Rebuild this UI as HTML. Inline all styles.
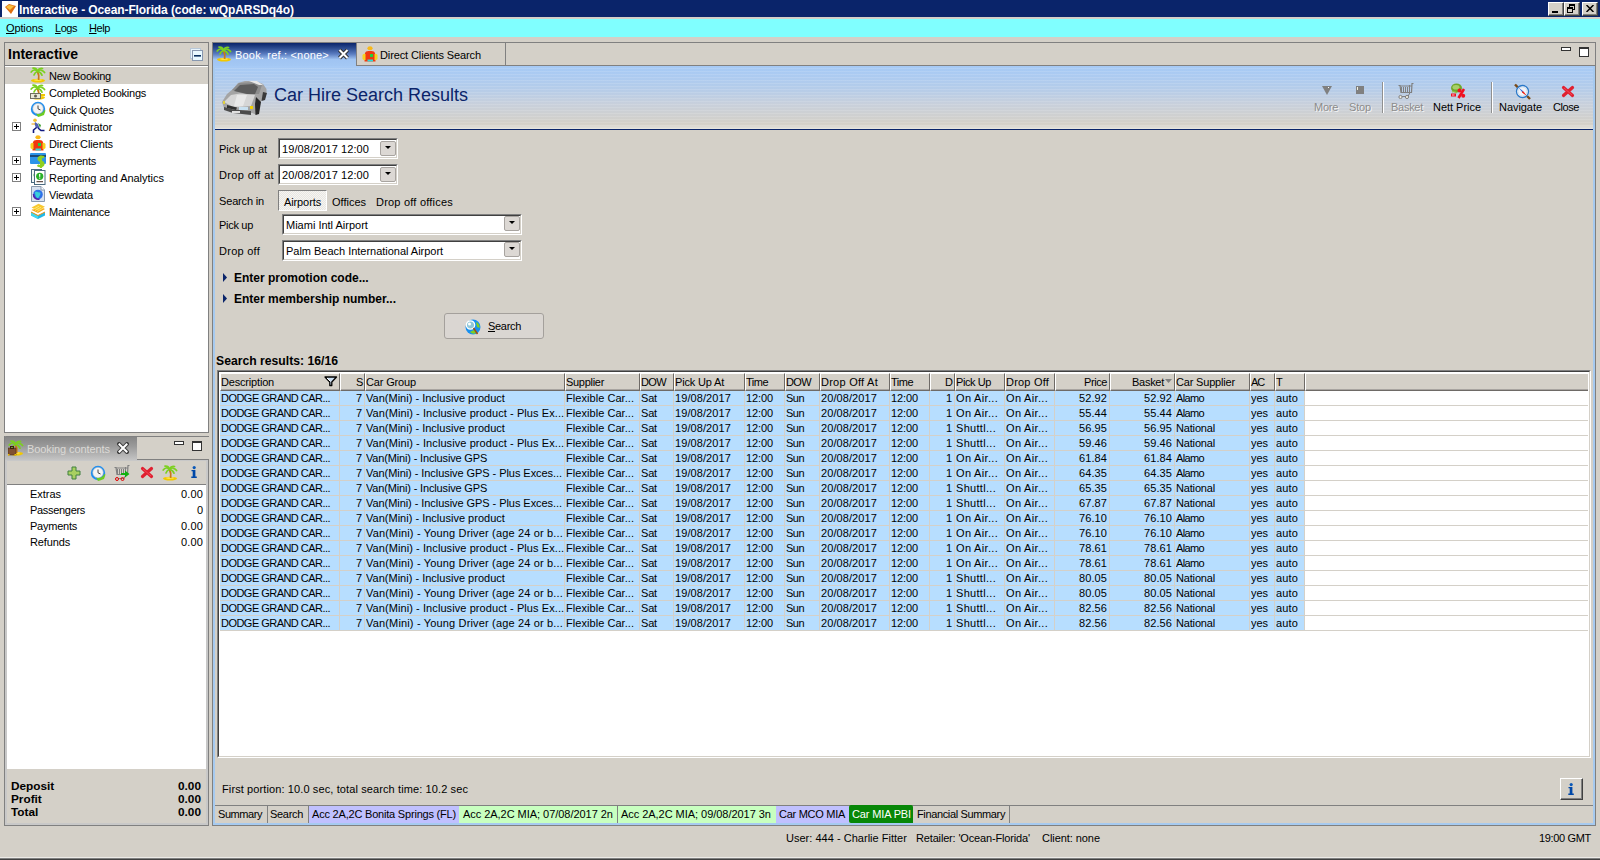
<!DOCTYPE html>
<html><head><meta charset="utf-8">
<style>
*{box-sizing:border-box;margin:0;padding:0}
html,body{width:1600px;height:860px;overflow:hidden;background:#D4D0C8;font-family:"Liberation Sans",sans-serif;font-size:11px;color:#000}
.a{position:absolute}
.t{position:absolute;white-space:nowrap;line-height:13px}
#title{left:0;top:0;width:1600px;height:18px;background:#0A246A;border-bottom:1px solid #D4D0C8}
#menu{left:0;top:19px;width:1600px;height:18px;background:#80FFFF}
.wbtn{position:absolute;top:2px;width:16px;height:14px;background:#D4D0C8;border-top:1px solid #fff;border-left:1px solid #fff;border-right:1px solid #404040;border-bottom:1px solid #404040;box-shadow:inset -1px -1px 0 #808080}
.panel{position:absolute;border:1px solid #808080}
.sunk{border-top:1px solid #808080;border-left:1px solid #808080;border-right:1px solid #fff;border-bottom:1px solid #fff}
.sunk2{border-top:1px solid #404040;border-left:1px solid #404040;border-right:1px solid #D4D0C8;border-bottom:1px solid #D4D0C8;background:#fff}
.ddb{position:absolute;width:16px;height:15px;background:#DCD8D4;border:1px solid #A8A4A0;border-radius:2px}
.ddb:after{content:"";position:absolute;left:4px;top:4px;border-left:3px solid transparent;border-right:3px solid transparent;border-top:3px solid #000}
.u{text-decoration:underline}
.tb{}
symbol{overflow:visible}
.hc{position:absolute;top:373px;height:18px;background:#D4D0C8;border-top:1px solid #fff;border-left:1px solid #fff;border-right:1px solid #6E6A66;border-bottom:1px solid #6E6A66;box-shadow:inset 0 -1px 0 #A8A4A0}
.btab{top:806px;height:17px;border-right:1px solid #808080}
.plus{position:absolute;left:12px;width:9px;height:9px;border:1px solid #808080;background:#fff}
.plus:before{content:"";position:absolute;left:1px;top:3px;width:5px;height:1px;background:#000}
.plus:after{content:"";position:absolute;left:3px;top:1px;width:1px;height:5px;background:#000}
</style></head><body>

<svg width="0" height="0" style="position:absolute">
<defs>
<symbol id="palm" viewBox="0 0 16 16">
 <ellipse cx="8" cy="13.6" rx="7" ry="1.9" fill="#F2C800"/>
 <ellipse cx="8" cy="13" rx="4" ry="0.8" fill="#FFE860"/>
 <path d="M7.5 4.5 C8.8 7 9.2 9.5 8.6 13" stroke="#C87818" stroke-width="1.8" fill="none"/>
 <g stroke="#7CD020" stroke-width="1.7" fill="none" stroke-linecap="round">
  <path d="M7.5 4 C5.5 2.5 3 2.5 1.2 5"/><path d="M7.5 4 C9.5 2.5 12.5 2.5 14.6 5.5"/><path d="M7.5 4 C6.5 1.5 4.5 1 3 1.2"/><path d="M7.5 4 C9 1.2 11 1 12.5 1.5"/><path d="M7.5 4.2 C5.5 5 4.5 6.5 4 8"/><path d="M7.5 4.2 C10 5 11.5 6.5 12 8.2"/>
 </g>
</symbol>
<symbol id="clock" viewBox="0 0 16 16">
 <circle cx="8" cy="8" r="7.2" fill="#1E8EF0"/>
 <circle cx="8" cy="7.6" r="5.3" fill="#F4F4F4" stroke="#A0B0C0" stroke-width="0.6"/>
 <path d="M8 4.5 V7.8 L10.5 9" stroke="#303030" stroke-width="0.9" fill="none"/>
 <path d="M6 12.5 C9 14 12.5 12.5 14.5 9 L15.5 9.5 L14 14 L10 15.5 L8 16 Z" fill="#6CCC20"/>
</symbol>
<symbol id="redx" viewBox="0 0 14 13">
 <path d="M2.5 2.5 L11.5 10.5 M11.5 2.5 L2.5 10.5" stroke="#E02030" stroke-width="3.2" stroke-linecap="round"/>
 <path d="M3 3 L11 10" stroke="#FF6070" stroke-width="1" opacity="0.6"/>
</symbol>
<symbol id="cartg" viewBox="0 0 16 16">
 <path d="M0.5 2.5 H2 L3 9.5 H13.5 L14 0.5 H15.5" stroke="#808080" stroke-width="1.2" fill="none"/>
 <path d="M3.5 4 V9 M5.5 4 V9 M7.5 4 V9 M9.5 4 V9 M11.5 2 V9 M2 3 H14" stroke="#808080" stroke-width="1" fill="none"/>
 <path d="M12 9.5 L10 13.5 H4" stroke="#808080" stroke-width="1" fill="none"/>
</symbol>
</defs></svg>
<!-- TITLE BAR -->
<div id="title" class="a">
  <div class="a" style="left:2px;top:1px;width:16px;height:16px;background:#fff"></div>
  <svg class="a" style="left:2px;top:1px" width="16" height="16"><path d="M3 6 L7 3 L14 5 L9 13 Z" fill="#E07010"/><path d="M4 6 L7 4 L12 5 L8 9 Z" fill="#F8C040"/></svg>
  <div class="t" style="left:19px;top:4px;color:#fff;font-weight:bold;font-size:12px;letter-spacing:-0.1px">Interactive - Ocean-Florida (code: wQpARSDq4o)</div>
  <div class="wbtn" style="left:1548px"><div class="a" style="left:3px;top:8px;width:6px;height:2px;background:#000"></div></div>
  <div class="wbtn" style="left:1564px"><div class="a" style="left:4px;top:1px;width:6px;height:6px;border:1px solid #000;border-top-width:2px"></div><div class="a" style="left:2px;top:4px;width:6px;height:6px;border:1px solid #000;border-top-width:2px;background:#D4D0C8"></div></div>
  <div class="wbtn" style="left:1582px"><svg class="a" style="left:3px;top:2px" width="8" height="7"><path d="M0.5 0 L7.5 7 M7.5 0 L0.5 7" stroke="#000" stroke-width="1.5"/></svg></div>
</div>

<!-- MENU -->
<div id="menu" class="a">
  <div class="t" style="left:6px;top:3px;letter-spacing:-0.13px"><span class="u">O</span>ptions</div>
  <div class="t" style="left:55px;top:3px;letter-spacing:-0.46px"><span class="u">L</span>ogs</div>
  <div class="t" style="left:89px;top:3px;letter-spacing:-0.41px"><span class="u">H</span>elp</div>
</div>

<!-- LEFT PANEL: Interactive -->
<div class="a" style="left:4px;top:42px;width:205px;height:391px;border:1px solid #808080;background:#fff">
  <div class="a" style="left:0;top:0;width:203px;height:23px;background:#D4D0C8;border-bottom:1px solid #808080"></div>
  <div class="t" style="left:3px;top:3px;font-weight:bold;font-size:14px;line-height:16px">Interactive</div>
  <svg class="a" style="left:185px;top:5px" width="14" height="14"><rect x="0.5" y="0.5" width="10" height="10" fill="#E8F4FC" stroke="#B8C8D8"/><rect x="2.5" y="2.5" width="10" height="10" fill="#E8F8FF" stroke="#8898B0"/><rect x="4" y="7" width="7" height="1.6" fill="#0A3060"/></svg>
  <div class="a" style="left:0;top:23px;width:203px;height:1px;background:#fff"></div>
  <div class="a" style="left:0;top:24px;width:203px;height:17px;background:#D4D0C8"></div>
</div>
<div id="tree">
  <div class="t" style="left:49px;top:70px;letter-spacing:-0.26px">New Booking</div>
  <div class="t" style="left:49px;top:87px;letter-spacing:-0.25px">Completed Bookings</div>
  <div class="t" style="left:49px;top:104px;letter-spacing:-0.14px">Quick Quotes</div>
  <div class="t" style="left:49px;top:121px;letter-spacing:-0.14px">Administrator</div>
  <div class="t" style="left:49px;top:138px;letter-spacing:-0.10px">Direct Clients</div>
  <div class="t" style="left:49px;top:155px;letter-spacing:-0.24px">Payments</div>
  <div class="t" style="left:49px;top:172px;letter-spacing:-0.03px">Reporting and Analytics</div>
  <div class="t" style="left:49px;top:189px;letter-spacing:-0.13px">Viewdata</div>
  <div class="t" style="left:49px;top:206px;letter-spacing:-0.18px">Maintenance</div>
  <div class="plus" style="top:122px"></div>
  <div class="plus" style="top:156px"></div>
  <div class="plus" style="top:173px"></div>
  <div class="plus" style="top:207px"></div>

  <svg class="a" style="left:30px;top:67px" width="16" height="16"><use href="#palm"/></svg>
  <svg class="a" style="left:30px;top:84px" width="16" height="16"><use href="#palm"/><rect x="0.5" y="9.5" width="10" height="5" fill="#E8E8D8" stroke="#707060"/><circle cx="5.5" cy="12" r="1.5" fill="#606050"/><path d="M11 11 H15" stroke="#F0C800" stroke-width="2"/></svg>
  <svg class="a" style="left:30px;top:101px" width="16" height="16"><use href="#clock"/></svg>
  <svg class="a" style="left:30px;top:118px" width="16" height="16"><circle cx="5" cy="2.2" r="1.8" fill="#F0C030"/><path d="M5 4 L8 6 L9.5 10 L6 10 L4.5 6 Z" fill="#5060B0"/><path d="M8 5 L11 7 L10 10 Z" fill="#40A030"/><path d="M1.5 6 H5" stroke="#F0B030" stroke-width="1.2"/><path d="M6.5 9.5 L3.5 12 L3.5 15 M8 10 L11 12.5 L14.5 12.5" stroke="#101880" stroke-width="1.6" fill="none"/></svg>
  <svg class="a" style="left:30px;top:135px" width="16" height="16"><ellipse cx="8" cy="2.3" rx="2.6" ry="2" fill="#F8B818"/><path d="M3 7 Q3.5 5 6.5 5 H9.5 Q12.5 5 13 7 L13.5 15.5 H2.5 Z" fill="#F03810"/><path d="M0.5 9 Q2 7 3.5 8 L3.5 14 Q1.5 14.5 0.5 13 Z M15.5 9 Q14 7 12.5 8 L12.5 14 Q14.5 14.5 15.5 13 Z" fill="#F8D020"/><rect x="8" y="8" width="3" height="3" fill="#20D040"/><rect x="5.5" y="13.5" width="5.5" height="2" fill="#30D8D8"/></svg>
  <svg class="a" style="left:30px;top:152px" width="16" height="16"><rect x="0" y="1" width="16" height="11" rx="1" fill="#2C94E8"/><rect x="0" y="3" width="16" height="2" fill="#1A4A78"/><path d="M14 5.5 C12 4 8.5 4.5 8.5 7 C8.5 9.5 13.5 9 13.5 11.8 C13.5 14.5 9.5 14.8 7.5 13.2 M11 3.5 V16" stroke="#90D020" stroke-width="2.2" fill="none"/></svg>
  <svg class="a" style="left:30px;top:169px" width="16" height="16"><rect x="1.5" y="0.5" width="10" height="13" fill="#F4F8FA" stroke="#4A6A80"/><circle cx="6" cy="6" r="2.5" fill="#30B030"/><rect x="4.5" y="1.5" width="10.5" height="14" fill="#fff" stroke="#4A6A80"/><circle cx="9.7" cy="7.3" r="3.6" fill="#28B028"/><rect x="9.1" y="5" width="1.2" height="2.8" fill="#fff"/><rect x="9.1" y="8.6" width="1.2" height="1" fill="#fff"/><rect x="6.5" y="12.2" width="6.5" height="1" fill="#402820"/></svg>
  <svg class="a" style="left:30px;top:186px" width="16" height="16"><path d="M1.5 0.5 H11 L14.5 4 V15.5 H1.5 Z" fill="#D8E2F0" stroke="#8A9AAE"/><path d="M11 0.5 V4 H14.5" fill="#fff" stroke="#8A9AAE"/><circle cx="8" cy="8.5" r="4.8" fill="#2E70E8"/><path d="M5 6 C7 5 8 7 10 6.2 C11.5 8 9 10.5 8 12.5 C6 11.5 5 9 5 6Z" fill="#38D0D8"/><path d="M3.5 8 C3.3 11.5 6 13.8 9.5 13.2" stroke="#5020A8" stroke-width="1.5" fill="none"/></svg>
  <svg class="a" style="left:30px;top:203px" width="16" height="16"><path d="M1 9 L8 12.5 L15 9 V12.5 L8 16 L1 12.5 Z" fill="#20B8E8"/><path d="M1 9 L8 12.5 V16 L1 12.5Z" fill="#40D8F0"/><path d="M1.5 7 L8.5 3 L15 6 L8 10 Z" fill="#F8A818"/><path d="M1.5 4.5 L8.5 0.8 L15 3.8 L8 7.5 Z" fill="#F8C830"/><path d="M3 6.5 L9 3.2 M5 7.5 L11 4.3 M7 8.5 L13 5.3" stroke="#FFF080" stroke-width="0.8"/><path d="M1 9 L8 12.5 L15 9" stroke="#E89010" stroke-width="1" fill="none"/></svg>
</div>

<!-- LEFT PANEL: Booking contents -->
<div class="a" style="left:4px;top:436px;width:205px;height:390px;border:1px solid #808080;border-top:none;background:#D4D0C8">
  <div class="a" style="left:132px;top:0;width:72px;height:24px;border-top:1px solid #808080;border-bottom:1px solid #808080;background:#D4D0C8"></div>
  <div class="a" style="left:-1px;top:0;width:133px;height:24px;background:linear-gradient(#868686,#9A9A9A 40%,#C4C4C4);border-left:1px solid #808080;border-top:1px solid #808080;border-top-left-radius:2px"></div>
  <div class="a" style="left:0;top:24px;width:203px;height:365px;border:2px solid #C8C8C8;border-top:1px solid #C8C8C8;"></div>
  <div class="a" style="left:2px;top:25px;width:199px;height:24px;background:#D4D0C8;border-bottom:1px solid #808080"></div>
  <div class="a" style="left:2px;top:49px;width:199px;height:284px;background:#fff"></div>
</div>
<div class="t" style="left:27px;top:443px;color:#DCDAD6;letter-spacing:-0.09px">Booking contents</div>
<svg class="a" style="left:117px;top:442px" width="12" height="12"><path d="M2 2 L10 10 M10 2 L2 10" stroke="#404040" stroke-width="4" stroke-linecap="square"/><path d="M2.5 2.5 L9.5 9.5 M9.5 2.5 L2.5 9.5" stroke="#fff" stroke-width="2" stroke-linecap="square"/></svg>
<div class="a" style="left:174px;top:441px;width:10px;height:4px;border:1px solid #333;background:#fff"></div>
<div class="a" style="left:192px;top:441px;width:10px;height:10px;border:1px solid #333;border-top-width:2px;background:#fff"></div>
<div class="t" style="left:30px;top:488px;letter-spacing:-0.03px">Extras</div><div class="t" style="left:150px;width:53px;text-align:right;top:488px;letter-spacing:0.14px">0.00</div>
<div class="t" style="left:30px;top:504px;letter-spacing:-0.31px">Passengers</div><div class="t" style="left:150px;width:53px;text-align:right;top:504px;letter-spacing:-0.12px">0</div>
<div class="t" style="left:30px;top:520px;letter-spacing:-0.24px">Payments</div><div class="t" style="left:150px;width:53px;text-align:right;top:520px;letter-spacing:0.14px">0.00</div>
<div class="t" style="left:30px;top:536px;letter-spacing:-0.14px">Refunds</div><div class="t" style="left:150px;width:53px;text-align:right;top:536px;letter-spacing:0.14px">0.00</div>
<div class="t" style="left:11px;top:780px;font-weight:bold;font-size:11.8px">Deposit</div><div class="t" style="left:150px;width:51px;text-align:right;top:780px;font-weight:bold;font-size:11.8px">0.00</div>
<div class="t" style="left:11px;top:793px;font-weight:bold;font-size:11.8px">Profit</div><div class="t" style="left:150px;width:51px;text-align:right;top:793px;font-weight:bold;font-size:11.8px">0.00</div>
<div class="t" style="left:11px;top:806px;font-weight:bold;font-size:11.8px">Total</div><div class="t" style="left:150px;width:51px;text-align:right;top:806px;font-weight:bold;font-size:11.8px">0.00</div>
<svg class="a" style="left:8px;top:440px" width="16" height="16"><use href="#palm"/><rect x="0" y="8" width="8" height="7" fill="#805030" stroke="#402010" stroke-width="0.5"/><rect x="2.5" y="6.5" width="3" height="2" fill="none" stroke="#402010"/><rect x="0" y="14" width="1.5" height="1.5" fill="#F0C000"/><rect x="6.5" y="14" width="1.5" height="1.5" fill="#F0C000"/></svg>
<svg class="a" style="left:67px;top:466px" width="14" height="14"><path d="M5 1 H9 V5 H13 V9 H9 V13 H5 V9 H1 V5 H5 Z" fill="#A8D060" stroke="#408040" stroke-width="1"/></svg>
<svg class="a" style="left:90px;top:465px" width="16" height="16"><use href="#clock"/></svg>
<svg class="a" style="left:114px;top:465px" width="16" height="16"><use href="#cartg"/><circle cx="3" cy="14" r="1.5" fill="none" stroke="#E00000" stroke-width="1"/><circle cx="8.5" cy="14" r="1.5" fill="none" stroke="#E00000" stroke-width="1"/><path d="M7 8 H11 V5.5 L15.5 9 L11 12.5 V10 H7 Z" fill="#10B010"/></svg>
<svg class="a" style="left:140px;top:466px" width="14" height="13"><use href="#redx"/></svg>
<svg class="a" style="left:162px;top:465px" width="16" height="16"><use href="#palm"/></svg>
<svg class="a" style="left:191px;top:466px" width="6" height="12"><circle cx="3.2" cy="1.6" r="1.6" fill="#0A58B8"/><path d="M0.5 4 H4.4 V10.6 H5.8 V12 H0.3 V10.6 H1.7 V5.3 H0.5 Z" fill="#0048A8"/></svg>

<!-- MAIN PANEL -->
<div class="a" style="left:212px;top:42px;width:1384px;height:784px;border:1px solid #808080;border-top:none;background:#D4D0C8"></div>
<!-- tab strip -->
<div class="a" style="left:213px;top:42px;width:1382px;height:1px;background:#808080"></div>
<div class="a" style="left:213px;top:65px;width:1382px;height:1px;background:#808080"></div>
<div class="a" style="left:356px;top:43px;width:1px;height:22px;background:#808080"></div>
<div class="a" style="left:505px;top:43px;width:1px;height:22px;background:#808080"></div>
<!-- active tab -->
<div class="a" style="left:213px;top:43px;width:143px;height:23px;background:linear-gradient(#0A246A 0px,#2A4A8E 5px,#5A7CC0 11px,#8CB0E4 15px,#A0C4F2 16.5px,#A4C8F4 23px)"></div>
<svg class="a" style="left:216px;top:46px" width="16" height="16"><use href="#palm"/></svg>
<div class="t" style="left:235px;top:49px;color:#FFFFFF;letter-spacing:0.19px">Book. ref.: &lt;none&gt;</div>
<svg class="a" style="left:337px;top:48px" width="13" height="12"><path d="M2.5 2 L10.5 10 M10.5 2 L2.5 10" stroke="#303030" stroke-width="4"/><path d="M2.5 2 L10.5 10 M10.5 2 L2.5 10" stroke="#fff" stroke-width="2"/></svg>
<svg class="a" style="left:362px;top:46px" width="16" height="16"><ellipse cx="8" cy="2.3" rx="2.6" ry="2" fill="#F8B818"/><path d="M3 7 Q3.5 5 6.5 5 H9.5 Q12.5 5 13 7 L13.5 15.5 H2.5 Z" fill="#F03810"/><path d="M0.5 9 Q2 7 3.5 8 L3.5 14 Q1.5 14.5 0.5 13 Z M15.5 9 Q14 7 12.5 8 L12.5 14 Q14.5 14.5 15.5 13 Z" fill="#F8D020"/><rect x="8" y="8" width="3" height="3" fill="#20D040"/><rect x="5.5" y="13.5" width="5.5" height="2" fill="#30D8D8"/></svg>
<div class="t" style="left:380px;top:49px;letter-spacing:-0.11px">Direct Clients Search</div>
<!-- tab min/max -->
<div class="a" style="left:1561px;top:47px;width:10px;height:4px;border:1px solid #333;background:#fff"></div>
<div class="a" style="left:1579px;top:47px;width:10px;height:10px;border:1px solid #333;border-top-width:2px;background:#fff"></div>
<!-- blue frame -->
<div class="a" style="left:213px;top:66px;width:2px;height:759px;background:#A6CAF0"></div>
<div class="a" style="left:1593px;top:66px;width:2px;height:759px;background:#A6CAF0"></div>
<div class="a" style="left:213px;top:823px;width:1382px;height:2px;background:#A6CAF0"></div>
<!-- header -->
<div class="a" style="left:215px;top:66px;width:1378px;height:63px;background:linear-gradient(#A6CAF6 0%,#B4CCEA 35%,#C8D0DC 60%,#D4D0C8 92%,#E4E2DC 100%)"></div>
<div class="a" style="left:215px;top:66px;width:1378px;height:63px;background:repeating-linear-gradient(rgba(255,255,255,0) 0px,rgba(255,255,255,0) 2px,rgba(255,255,255,0.12) 2px,rgba(255,255,255,0.12) 3px)"></div>
<div class="a" style="left:215px;top:129px;width:1378px;height:1px;background:#0A246A"></div>
<div class="t" style="left:274px;top:85px;font-size:18px;line-height:20px;color:#0A246A">Car Hire Search Results</div>
<svg class="a" style="left:221px;top:80px" width="48" height="36">
<path d="M1 22 L6 14 L12 9 L17 3 L24 1 L35 1 L42 4 L45.5 9 L45.5 13 L41 20 L37 26 L36 35 L31 33 L25 34 L12 31 L3 28 Z" fill="#A4A4A4"/>
<path d="M11 10 L18 3 L34 2 L41 5 L38 14 L28 14 L18 12 Z" fill="#8C8C8C"/>
<path d="M13 11 L19 5 L33 4 L37 7 L34 14 L26 14 Z" fill="#5C5C5C"/>
<path d="M3 22 L10 15 L19 13.5 L34 15 L30 26 L13 27.5 Z" fill="#D6D6D6"/>
<path d="M16 15 L26 15 L22 26 L13 26 Z" fill="#E8E8E8"/>
<path d="M3 27 L12 29.5 L30 31 L30 35 L12 33 L3 30 Z" fill="#4C4C4C"/>
<path d="M6 25 L16 27.5 L15 30 L6 28 Z" fill="#303030"/>
<rect x="11" y="31" width="8" height="2" fill="#E0E0E0"/>
<rect x="18" y="27" width="9" height="3" fill="#C8E0F0"/>
<rect x="29" y="26" width="3" height="3" fill="#F0D000"/>
<rect x="2" y="21" width="2" height="3" fill="#E0D040"/>
<path d="M35 17 L40 22 L38 34 L34.5 35 L34 24 Z" fill="#282828"/>
<path d="M42 12 L46 13 L44 20 L40.5 21 Z" fill="#3A3A3A"/>
<path d="M28 1 L36 1 L42 5 L38 5 Z" fill="#E8E8E8"/>
</svg>
<!-- toolbar -->
<div class="t tb" style="left:1314px;top:101px;color:#8C8C8C;text-shadow:1px 1px 0 #F4F4F4;letter-spacing:-0.27px">More</div>
<div class="t tb" style="left:1349px;top:101px;color:#8C8C8C;text-shadow:1px 1px 0 #F4F4F4;letter-spacing:-0.16px">Stop</div>
<div class="a" style="left:1382px;top:82px;width:1px;height:31px;background:#909090;box-shadow:1px 0 0 #fff"></div>
<div class="t tb" style="left:1391px;top:101px;color:#8C8C8C;text-shadow:1px 1px 0 #F4F4F4;letter-spacing:-0.27px">Basket</div>
<div class="t tb" style="left:1433px;top:101px;letter-spacing:-0.03px">Nett Price</div>
<div class="a" style="left:1491px;top:82px;width:1px;height:31px;background:#909090;box-shadow:1px 0 0 #fff"></div>
<div class="t tb" style="left:1499px;top:101px;letter-spacing:-0.05px">Navigate</div>
<div class="t tb" style="left:1553px;top:101px;letter-spacing:-0.42px">Close</div>
<svg class="a" style="left:1322px;top:86px" width="10" height="9"><path d="M0 0 H10 L5 9 Z" fill="#808080"/><rect x="6" y="1" width="1" height="1" fill="#fff"/></svg>
<svg class="a" style="left:1356px;top:86px" width="8" height="8"><rect width="8" height="8" fill="#808080"/><rect x="1" y="1" width="1" height="3" fill="#F0F0E0"/></svg>
<svg class="a" style="left:1398px;top:83px" width="16" height="16"><use href="#cartg"/><circle cx="2.5" cy="14" r="1.6" fill="#F0ECE0" stroke="#808080"/><circle cx="9" cy="14" r="1.6" fill="#F0ECE0" stroke="#808080"/></svg>
<svg class="a" style="left:1450px;top:83px" width="16" height="16"><ellipse cx="6.5" cy="5" rx="5.5" ry="4.5" fill="#70A828"/><ellipse cx="6" cy="4.2" rx="3.5" ry="2.3" fill="#A8D068"/><path d="M2 9 C4 8 6 9 7 10" stroke="#90C040" stroke-width="1.2" fill="none"/><rect x="1" y="10.5" width="5" height="3" fill="#F01020"/><rect x="2" y="11.5" width="2.5" height="1" fill="#FFC0C0"/><circle cx="9.5" cy="7.5" r="2" fill="#F01020"/><circle cx="13.2" cy="12.8" r="2" fill="#F01020"/><path d="M14 6 L8.5 15" stroke="#F01020" stroke-width="2.6"/></svg>
<svg class="a" style="left:1514px;top:83px" width="17" height="17"><path d="M1 1.5 L4 4.5" stroke="#7A4A18" stroke-width="2.4"/><path d="M13 13 L16 16" stroke="#7A4A18" stroke-width="2.4"/><circle cx="8.5" cy="8.5" r="6" fill="#F0F4FA" stroke="#2A78C8" stroke-width="1.3"/><circle cx="8.5" cy="8.5" r="4.5" fill="none" stroke="#C8D8E8" stroke-width="0.8"/><path d="M4.5 4.5 L8.5 9.5 L9.5 8.5 Z" fill="#2A60D0"/><path d="M12.5 12.5 L8.5 8 L8 9.5 Z" fill="#F02010"/><path d="M12.5 12.5 L9.5 8.5 L8.5 9.5 Z" fill="#F02010"/></svg>
<svg class="a" style="left:1561px;top:85px" width="14" height="13"><use href="#redx"/></svg>
<!-- form -->
<div class="t" style="left:219px;top:143px;letter-spacing:-0.03px">Pick up at</div>
<div class="t" style="left:219px;top:169px;letter-spacing:0.35px">Drop off at</div>
<div class="t" style="left:219px;top:195px;letter-spacing:-0.16px">Search in</div>
<div class="t" style="left:219px;top:219px;letter-spacing:-0.30px">Pick up</div>
<div class="t" style="left:219px;top:245px;letter-spacing:0.26px">Drop off</div>
<div class="a sunk" style="left:278px;top:138px;width:120px;height:21px"><div class="a sunk2" style="left:0;top:0;width:118px;height:19px"></div></div>
<div class="t" style="left:282px;top:143px;letter-spacing:0.08px">19/08/2017 12:00</div>
<div class="ddb" style="left:380px;top:141px"></div>
<div class="a sunk" style="left:278px;top:164px;width:120px;height:21px"><div class="a sunk2" style="left:0;top:0;width:118px;height:19px"></div></div>
<div class="t" style="left:282px;top:169px;letter-spacing:0.08px">20/08/2017 12:00</div>
<div class="ddb" style="left:380px;top:167px"></div>
<div class="a" style="left:278px;top:190px;width:49px;height:21px;border-top:1px solid #808080;border-left:1px solid #808080;border-right:1px solid #fff;border-bottom:1px solid #fff;background:repeating-conic-gradient(#E8E6E2 0 25%,#F6F5F2 0 50%) 0 0/2px 2px"></div>
<div class="t" style="left:284px;top:196px;letter-spacing:-0.11px">Airports</div>
<div class="t" style="left:332px;top:196px;letter-spacing:-0.00px">Offices</div>
<div class="t" style="left:376px;top:196px;letter-spacing:0.21px">Drop off offices</div>
<div class="a sunk" style="left:282px;top:214px;width:240px;height:21px"><div class="a sunk2" style="left:0;top:0;width:238px;height:19px"></div></div>
<div class="t" style="left:286px;top:219px;letter-spacing:0.00px">Miami Intl Airport</div>
<div class="ddb" style="left:504px;top:216px"></div>
<div class="a sunk" style="left:282px;top:240px;width:240px;height:21px"><div class="a sunk2" style="left:0;top:0;width:238px;height:19px"></div></div>
<div class="t" style="left:286px;top:245px;letter-spacing:-0.02px">Palm Beach International Airport</div>
<div class="ddb" style="left:504px;top:242px"></div>
<svg class="a" style="left:222px;top:273px" width="6" height="9"><path d="M1 0 L5 4.5 L1 9 Z" fill="#0A246A"/></svg>
<div class="t" style="left:234px;top:272px;font-weight:bold;font-size:12px">Enter promotion code...</div>
<svg class="a" style="left:222px;top:294px" width="6" height="9"><path d="M1 0 L5 4.5 L1 9 Z" fill="#0A246A"/></svg>
<div class="t" style="left:234px;top:293px;font-weight:bold;font-size:12px">Enter membership number...</div>
<div class="a" style="left:444px;top:313px;width:100px;height:26px;border:1px solid #A4A09C;border-radius:3px;background:#DAD6D2"></div>
<div class="t" style="left:488px;top:320px;letter-spacing:-0.31px"><span class="u">S</span>earch</div>
<svg class="a" style="left:465px;top:319px" width="17" height="17"><circle cx="8" cy="8" r="7.5" fill="#1890F0"/><path d="M11 3 C14 4 15 7 14.5 9 L12 8 Z M5 13 C7 15 10 15 11 14 L9 11Z" fill="#80D020"/><circle cx="5.5" cy="6" r="4.2" fill="#90C8D8" stroke="#fff" stroke-width="1.2"/><circle cx="4.5" cy="5" r="1.5" fill="#fff"/><path d="M8.5 9 L12.5 15" stroke="#A05010" stroke-width="1.5"/></svg>
<div class="t" style="left:216px;top:355px;font-weight:bold;font-size:12.2px">Search results: 16/16</div>
<!-- TABLE START -->
<div class="a" style="left:217px;top:370px;width:1374px;height:388px;border-top:1px solid #808080;border-left:1px solid #808080;border-right:1px solid #fff;border-bottom:1px solid #fff"><div class="a" style="left:0;top:0;width:1372px;height:386px;border-top:1px solid #404040;border-left:1px solid #404040;border-right:1px solid #D4D0C8;border-bottom:1px solid #D4D0C8;background:#fff"></div></div>
<div class="hc" style="left:220px;width:120px"></div>
<div class="hc" style="left:340px;width:25px"></div>
<div class="hc" style="left:365px;width:200px"></div>
<div class="hc" style="left:565px;width:75px"></div>
<div class="hc" style="left:640px;width:34px"></div>
<div class="hc" style="left:674px;width:71px"></div>
<div class="hc" style="left:745px;width:40px"></div>
<div class="hc" style="left:785px;width:35px"></div>
<div class="hc" style="left:820px;width:70px"></div>
<div class="hc" style="left:890px;width:40px"></div>
<div class="hc" style="left:930px;width:25px"></div>
<div class="hc" style="left:955px;width:50px"></div>
<div class="hc" style="left:1005px;width:50px"></div>
<div class="hc" style="left:1055px;width:55px"></div>
<div class="hc" style="left:1110px;width:65px"></div>
<div class="hc" style="left:1175px;width:75px"></div>
<div class="hc" style="left:1250px;width:25px"></div>
<div class="hc" style="left:1275px;width:30px"></div>
<div class="hc" style="left:1305px;width:283px;border-right:none"></div>
<div class="t" style="left:221px;top:376px;letter-spacing:-0.18px">Description</div>
<div class="t" style="left:340px;width:22px;text-align:right;top:376px;letter-spacing:-1.34px">S</div>
<div class="t" style="left:366px;top:376px;letter-spacing:-0.15px">Car Group</div>
<div class="t" style="left:566px;top:376px;letter-spacing:-0.29px">Supplier</div>
<div class="t" style="left:641px;top:376px;letter-spacing:-0.63px">DOW</div>
<div class="t" style="left:675px;top:376px;letter-spacing:-0.17px">Pick Up At</div>
<div class="t" style="left:746px;top:376px;letter-spacing:-0.51px">Time</div>
<div class="t" style="left:786px;top:376px;letter-spacing:-0.63px">DOW</div>
<div class="t" style="left:821px;top:376px;letter-spacing:0.25px">Drop Off At</div>
<div class="t" style="left:891px;top:376px;letter-spacing:-0.51px">Time</div>
<div class="t" style="left:930px;width:22px;text-align:right;top:376px;letter-spacing:-0.95px">D</div>
<div class="t" style="left:956px;top:376px;letter-spacing:-0.42px">Pick Up</div>
<div class="t" style="left:1006px;top:376px;letter-spacing:0.20px">Drop Off</div>
<div class="t" style="left:1055px;width:52px;text-align:right;top:376px;letter-spacing:-0.41px">Price</div>
<div class="t" style="left:1110px;width:54px;text-align:right;top:376px;letter-spacing:-0.27px">Basket</div>
<div class="t" style="left:1176px;top:376px;letter-spacing:-0.18px">Car Supplier</div>
<div class="t" style="left:1251px;top:376px;letter-spacing:-1.14px">AC</div>
<div class="t" style="left:1276px;top:376px;letter-spacing:-0.73px">T</div>
<div class="a" style="left:220px;top:391px;width:1085px;height:240px;background:#B7DEFF"></div>
<div class="a" style="left:220px;top:405px;width:1368px;height:1px;background:#D4D0C8"></div>
<div class="a" style="left:220px;top:420px;width:1368px;height:1px;background:#D4D0C8"></div>
<div class="a" style="left:220px;top:435px;width:1368px;height:1px;background:#D4D0C8"></div>
<div class="a" style="left:220px;top:450px;width:1368px;height:1px;background:#D4D0C8"></div>
<div class="a" style="left:220px;top:465px;width:1368px;height:1px;background:#D4D0C8"></div>
<div class="a" style="left:220px;top:480px;width:1368px;height:1px;background:#D4D0C8"></div>
<div class="a" style="left:220px;top:495px;width:1368px;height:1px;background:#D4D0C8"></div>
<div class="a" style="left:220px;top:510px;width:1368px;height:1px;background:#D4D0C8"></div>
<div class="a" style="left:220px;top:525px;width:1368px;height:1px;background:#D4D0C8"></div>
<div class="a" style="left:220px;top:540px;width:1368px;height:1px;background:#D4D0C8"></div>
<div class="a" style="left:220px;top:555px;width:1368px;height:1px;background:#D4D0C8"></div>
<div class="a" style="left:220px;top:570px;width:1368px;height:1px;background:#D4D0C8"></div>
<div class="a" style="left:220px;top:585px;width:1368px;height:1px;background:#D4D0C8"></div>
<div class="a" style="left:220px;top:600px;width:1368px;height:1px;background:#D4D0C8"></div>
<div class="a" style="left:220px;top:615px;width:1368px;height:1px;background:#D4D0C8"></div>
<div class="a" style="left:220px;top:630px;width:1368px;height:1px;background:#D4D0C8"></div>
<div class="a" style="left:339px;top:391px;width:1px;height:240px;background:#D4D0C8"></div>
<div class="a" style="left:364px;top:391px;width:1px;height:240px;background:#D4D0C8"></div>
<div class="a" style="left:564px;top:391px;width:1px;height:240px;background:#D4D0C8"></div>
<div class="a" style="left:639px;top:391px;width:1px;height:240px;background:#D4D0C8"></div>
<div class="a" style="left:673px;top:391px;width:1px;height:240px;background:#D4D0C8"></div>
<div class="a" style="left:744px;top:391px;width:1px;height:240px;background:#D4D0C8"></div>
<div class="a" style="left:784px;top:391px;width:1px;height:240px;background:#D4D0C8"></div>
<div class="a" style="left:819px;top:391px;width:1px;height:240px;background:#D4D0C8"></div>
<div class="a" style="left:889px;top:391px;width:1px;height:240px;background:#D4D0C8"></div>
<div class="a" style="left:929px;top:391px;width:1px;height:240px;background:#D4D0C8"></div>
<div class="a" style="left:954px;top:391px;width:1px;height:240px;background:#D4D0C8"></div>
<div class="a" style="left:1004px;top:391px;width:1px;height:240px;background:#D4D0C8"></div>
<div class="a" style="left:1054px;top:391px;width:1px;height:240px;background:#D4D0C8"></div>
<div class="a" style="left:1109px;top:391px;width:1px;height:240px;background:#D4D0C8"></div>
<div class="a" style="left:1174px;top:391px;width:1px;height:240px;background:#D4D0C8"></div>
<div class="a" style="left:1249px;top:391px;width:1px;height:240px;background:#D4D0C8"></div>
<div class="a" style="left:1274px;top:391px;width:1px;height:240px;background:#D4D0C8"></div>
<div class="a" style="left:1304px;top:391px;width:1px;height:240px;background:#D4D0C8"></div>
<div class="t" style="left:221px;top:392px;width:118px;overflow:hidden;letter-spacing:-0.53px">DODGE GRAND CAR...</div>
<div class="t" style="left:340px;width:22px;text-align:right;top:392px;letter-spacing:-0.12px">7</div>
<div class="t" style="left:366px;top:392px;width:198px;overflow:hidden;letter-spacing:0.01px">Van(Mini) - Inclusive product</div>
<div class="t" style="left:566px;top:392px;width:73px;overflow:hidden;letter-spacing:0.05px">Flexible Car...</div>
<div class="t" style="left:641px;top:392px;width:32px;overflow:hidden;letter-spacing:-0.17px">Sat</div>
<div class="t" style="left:675px;top:392px;width:69px;overflow:hidden;letter-spacing:0.09px">19/08/2017</div>
<div class="t" style="left:746px;top:392px;width:38px;overflow:hidden;letter-spacing:-0.11px">12:00</div>
<div class="t" style="left:786px;top:392px;width:33px;overflow:hidden;letter-spacing:-0.53px">Sun</div>
<div class="t" style="left:821px;top:392px;width:68px;overflow:hidden;letter-spacing:0.09px">20/08/2017</div>
<div class="t" style="left:891px;top:392px;width:38px;overflow:hidden;letter-spacing:-0.11px">12:00</div>
<div class="t" style="left:930px;width:22px;text-align:right;top:392px;letter-spacing:-0.12px">1</div>
<div class="t" style="left:956px;top:392px;width:48px;overflow:hidden;letter-spacing:0.32px">On Air...</div>
<div class="t" style="left:1006px;top:392px;width:48px;overflow:hidden;letter-spacing:0.32px">On Air...</div>
<div class="t" style="left:1055px;width:52px;text-align:right;top:392px;letter-spacing:0.09px">52.92</div>
<div class="t" style="left:1110px;width:62px;text-align:right;top:392px;letter-spacing:0.09px">52.92</div>
<div class="t" style="left:1176px;top:392px;width:73px;overflow:hidden;letter-spacing:-0.64px">Alamo</div>
<div class="t" style="left:1251px;top:392px;width:23px;overflow:hidden;letter-spacing:-0.04px">yes</div>
<div class="t" style="left:1276px;top:392px;width:28px;overflow:hidden;letter-spacing:0.14px">auto</div>
<div class="t" style="left:221px;top:407px;width:118px;overflow:hidden;letter-spacing:-0.53px">DODGE GRAND CAR...</div>
<div class="t" style="left:340px;width:22px;text-align:right;top:407px;letter-spacing:-0.12px">7</div>
<div class="t" style="left:366px;top:407px;width:198px;overflow:hidden;letter-spacing:0.08px">Van(Mini) - Inclusive product - Plus Ex...</div>
<div class="t" style="left:566px;top:407px;width:73px;overflow:hidden;letter-spacing:0.05px">Flexible Car...</div>
<div class="t" style="left:641px;top:407px;width:32px;overflow:hidden;letter-spacing:-0.17px">Sat</div>
<div class="t" style="left:675px;top:407px;width:69px;overflow:hidden;letter-spacing:0.09px">19/08/2017</div>
<div class="t" style="left:746px;top:407px;width:38px;overflow:hidden;letter-spacing:-0.11px">12:00</div>
<div class="t" style="left:786px;top:407px;width:33px;overflow:hidden;letter-spacing:-0.53px">Sun</div>
<div class="t" style="left:821px;top:407px;width:68px;overflow:hidden;letter-spacing:0.09px">20/08/2017</div>
<div class="t" style="left:891px;top:407px;width:38px;overflow:hidden;letter-spacing:-0.11px">12:00</div>
<div class="t" style="left:930px;width:22px;text-align:right;top:407px;letter-spacing:-0.12px">1</div>
<div class="t" style="left:956px;top:407px;width:48px;overflow:hidden;letter-spacing:0.32px">On Air...</div>
<div class="t" style="left:1006px;top:407px;width:48px;overflow:hidden;letter-spacing:0.32px">On Air...</div>
<div class="t" style="left:1055px;width:52px;text-align:right;top:407px;letter-spacing:0.09px">55.44</div>
<div class="t" style="left:1110px;width:62px;text-align:right;top:407px;letter-spacing:0.09px">55.44</div>
<div class="t" style="left:1176px;top:407px;width:73px;overflow:hidden;letter-spacing:-0.64px">Alamo</div>
<div class="t" style="left:1251px;top:407px;width:23px;overflow:hidden;letter-spacing:-0.04px">yes</div>
<div class="t" style="left:1276px;top:407px;width:28px;overflow:hidden;letter-spacing:0.14px">auto</div>
<div class="t" style="left:221px;top:422px;width:118px;overflow:hidden;letter-spacing:-0.53px">DODGE GRAND CAR...</div>
<div class="t" style="left:340px;width:22px;text-align:right;top:422px;letter-spacing:-0.12px">7</div>
<div class="t" style="left:366px;top:422px;width:198px;overflow:hidden;letter-spacing:0.01px">Van(Mini) - Inclusive product</div>
<div class="t" style="left:566px;top:422px;width:73px;overflow:hidden;letter-spacing:0.05px">Flexible Car...</div>
<div class="t" style="left:641px;top:422px;width:32px;overflow:hidden;letter-spacing:-0.17px">Sat</div>
<div class="t" style="left:675px;top:422px;width:69px;overflow:hidden;letter-spacing:0.09px">19/08/2017</div>
<div class="t" style="left:746px;top:422px;width:38px;overflow:hidden;letter-spacing:-0.11px">12:00</div>
<div class="t" style="left:786px;top:422px;width:33px;overflow:hidden;letter-spacing:-0.53px">Sun</div>
<div class="t" style="left:821px;top:422px;width:68px;overflow:hidden;letter-spacing:0.09px">20/08/2017</div>
<div class="t" style="left:891px;top:422px;width:38px;overflow:hidden;letter-spacing:-0.11px">12:00</div>
<div class="t" style="left:930px;width:22px;text-align:right;top:422px;letter-spacing:-0.12px">1</div>
<div class="t" style="left:956px;top:422px;width:48px;overflow:hidden;letter-spacing:0.30px">Shuttl...</div>
<div class="t" style="left:1006px;top:422px;width:48px;overflow:hidden;letter-spacing:0.32px">On Air...</div>
<div class="t" style="left:1055px;width:52px;text-align:right;top:422px;letter-spacing:0.09px">56.95</div>
<div class="t" style="left:1110px;width:62px;text-align:right;top:422px;letter-spacing:0.09px">56.95</div>
<div class="t" style="left:1176px;top:422px;width:73px;overflow:hidden;letter-spacing:-0.17px">National</div>
<div class="t" style="left:1251px;top:422px;width:23px;overflow:hidden;letter-spacing:-0.04px">yes</div>
<div class="t" style="left:1276px;top:422px;width:28px;overflow:hidden;letter-spacing:0.14px">auto</div>
<div class="t" style="left:221px;top:437px;width:118px;overflow:hidden;letter-spacing:-0.53px">DODGE GRAND CAR...</div>
<div class="t" style="left:340px;width:22px;text-align:right;top:437px;letter-spacing:-0.12px">7</div>
<div class="t" style="left:366px;top:437px;width:198px;overflow:hidden;letter-spacing:0.08px">Van(Mini) - Inclusive product - Plus Ex...</div>
<div class="t" style="left:566px;top:437px;width:73px;overflow:hidden;letter-spacing:0.05px">Flexible Car...</div>
<div class="t" style="left:641px;top:437px;width:32px;overflow:hidden;letter-spacing:-0.17px">Sat</div>
<div class="t" style="left:675px;top:437px;width:69px;overflow:hidden;letter-spacing:0.09px">19/08/2017</div>
<div class="t" style="left:746px;top:437px;width:38px;overflow:hidden;letter-spacing:-0.11px">12:00</div>
<div class="t" style="left:786px;top:437px;width:33px;overflow:hidden;letter-spacing:-0.53px">Sun</div>
<div class="t" style="left:821px;top:437px;width:68px;overflow:hidden;letter-spacing:0.09px">20/08/2017</div>
<div class="t" style="left:891px;top:437px;width:38px;overflow:hidden;letter-spacing:-0.11px">12:00</div>
<div class="t" style="left:930px;width:22px;text-align:right;top:437px;letter-spacing:-0.12px">1</div>
<div class="t" style="left:956px;top:437px;width:48px;overflow:hidden;letter-spacing:0.30px">Shuttl...</div>
<div class="t" style="left:1006px;top:437px;width:48px;overflow:hidden;letter-spacing:0.32px">On Air...</div>
<div class="t" style="left:1055px;width:52px;text-align:right;top:437px;letter-spacing:0.09px">59.46</div>
<div class="t" style="left:1110px;width:62px;text-align:right;top:437px;letter-spacing:0.09px">59.46</div>
<div class="t" style="left:1176px;top:437px;width:73px;overflow:hidden;letter-spacing:-0.17px">National</div>
<div class="t" style="left:1251px;top:437px;width:23px;overflow:hidden;letter-spacing:-0.04px">yes</div>
<div class="t" style="left:1276px;top:437px;width:28px;overflow:hidden;letter-spacing:0.14px">auto</div>
<div class="t" style="left:221px;top:452px;width:118px;overflow:hidden;letter-spacing:-0.53px">DODGE GRAND CAR...</div>
<div class="t" style="left:340px;width:22px;text-align:right;top:452px;letter-spacing:-0.12px">7</div>
<div class="t" style="left:366px;top:452px;width:198px;overflow:hidden;letter-spacing:-0.16px">Van(Mini) - Inclusive GPS</div>
<div class="t" style="left:566px;top:452px;width:73px;overflow:hidden;letter-spacing:0.05px">Flexible Car...</div>
<div class="t" style="left:641px;top:452px;width:32px;overflow:hidden;letter-spacing:-0.17px">Sat</div>
<div class="t" style="left:675px;top:452px;width:69px;overflow:hidden;letter-spacing:0.09px">19/08/2017</div>
<div class="t" style="left:746px;top:452px;width:38px;overflow:hidden;letter-spacing:-0.11px">12:00</div>
<div class="t" style="left:786px;top:452px;width:33px;overflow:hidden;letter-spacing:-0.53px">Sun</div>
<div class="t" style="left:821px;top:452px;width:68px;overflow:hidden;letter-spacing:0.09px">20/08/2017</div>
<div class="t" style="left:891px;top:452px;width:38px;overflow:hidden;letter-spacing:-0.11px">12:00</div>
<div class="t" style="left:930px;width:22px;text-align:right;top:452px;letter-spacing:-0.12px">1</div>
<div class="t" style="left:956px;top:452px;width:48px;overflow:hidden;letter-spacing:0.32px">On Air...</div>
<div class="t" style="left:1006px;top:452px;width:48px;overflow:hidden;letter-spacing:0.32px">On Air...</div>
<div class="t" style="left:1055px;width:52px;text-align:right;top:452px;letter-spacing:0.09px">61.84</div>
<div class="t" style="left:1110px;width:62px;text-align:right;top:452px;letter-spacing:0.09px">61.84</div>
<div class="t" style="left:1176px;top:452px;width:73px;overflow:hidden;letter-spacing:-0.64px">Alamo</div>
<div class="t" style="left:1251px;top:452px;width:23px;overflow:hidden;letter-spacing:-0.04px">yes</div>
<div class="t" style="left:1276px;top:452px;width:28px;overflow:hidden;letter-spacing:0.14px">auto</div>
<div class="t" style="left:221px;top:467px;width:118px;overflow:hidden;letter-spacing:-0.53px">DODGE GRAND CAR...</div>
<div class="t" style="left:340px;width:22px;text-align:right;top:467px;letter-spacing:-0.12px">7</div>
<div class="t" style="left:366px;top:467px;width:198px;overflow:hidden;letter-spacing:-0.06px">Van(Mini) - Inclusive GPS - Plus Exces...</div>
<div class="t" style="left:566px;top:467px;width:73px;overflow:hidden;letter-spacing:0.05px">Flexible Car...</div>
<div class="t" style="left:641px;top:467px;width:32px;overflow:hidden;letter-spacing:-0.17px">Sat</div>
<div class="t" style="left:675px;top:467px;width:69px;overflow:hidden;letter-spacing:0.09px">19/08/2017</div>
<div class="t" style="left:746px;top:467px;width:38px;overflow:hidden;letter-spacing:-0.11px">12:00</div>
<div class="t" style="left:786px;top:467px;width:33px;overflow:hidden;letter-spacing:-0.53px">Sun</div>
<div class="t" style="left:821px;top:467px;width:68px;overflow:hidden;letter-spacing:0.09px">20/08/2017</div>
<div class="t" style="left:891px;top:467px;width:38px;overflow:hidden;letter-spacing:-0.11px">12:00</div>
<div class="t" style="left:930px;width:22px;text-align:right;top:467px;letter-spacing:-0.12px">1</div>
<div class="t" style="left:956px;top:467px;width:48px;overflow:hidden;letter-spacing:0.32px">On Air...</div>
<div class="t" style="left:1006px;top:467px;width:48px;overflow:hidden;letter-spacing:0.32px">On Air...</div>
<div class="t" style="left:1055px;width:52px;text-align:right;top:467px;letter-spacing:0.09px">64.35</div>
<div class="t" style="left:1110px;width:62px;text-align:right;top:467px;letter-spacing:0.09px">64.35</div>
<div class="t" style="left:1176px;top:467px;width:73px;overflow:hidden;letter-spacing:-0.64px">Alamo</div>
<div class="t" style="left:1251px;top:467px;width:23px;overflow:hidden;letter-spacing:-0.04px">yes</div>
<div class="t" style="left:1276px;top:467px;width:28px;overflow:hidden;letter-spacing:0.14px">auto</div>
<div class="t" style="left:221px;top:482px;width:118px;overflow:hidden;letter-spacing:-0.53px">DODGE GRAND CAR...</div>
<div class="t" style="left:340px;width:22px;text-align:right;top:482px;letter-spacing:-0.12px">7</div>
<div class="t" style="left:366px;top:482px;width:198px;overflow:hidden;letter-spacing:-0.16px">Van(Mini) - Inclusive GPS</div>
<div class="t" style="left:566px;top:482px;width:73px;overflow:hidden;letter-spacing:0.05px">Flexible Car...</div>
<div class="t" style="left:641px;top:482px;width:32px;overflow:hidden;letter-spacing:-0.17px">Sat</div>
<div class="t" style="left:675px;top:482px;width:69px;overflow:hidden;letter-spacing:0.09px">19/08/2017</div>
<div class="t" style="left:746px;top:482px;width:38px;overflow:hidden;letter-spacing:-0.11px">12:00</div>
<div class="t" style="left:786px;top:482px;width:33px;overflow:hidden;letter-spacing:-0.53px">Sun</div>
<div class="t" style="left:821px;top:482px;width:68px;overflow:hidden;letter-spacing:0.09px">20/08/2017</div>
<div class="t" style="left:891px;top:482px;width:38px;overflow:hidden;letter-spacing:-0.11px">12:00</div>
<div class="t" style="left:930px;width:22px;text-align:right;top:482px;letter-spacing:-0.12px">1</div>
<div class="t" style="left:956px;top:482px;width:48px;overflow:hidden;letter-spacing:0.30px">Shuttl...</div>
<div class="t" style="left:1006px;top:482px;width:48px;overflow:hidden;letter-spacing:0.32px">On Air...</div>
<div class="t" style="left:1055px;width:52px;text-align:right;top:482px;letter-spacing:0.09px">65.35</div>
<div class="t" style="left:1110px;width:62px;text-align:right;top:482px;letter-spacing:0.09px">65.35</div>
<div class="t" style="left:1176px;top:482px;width:73px;overflow:hidden;letter-spacing:-0.17px">National</div>
<div class="t" style="left:1251px;top:482px;width:23px;overflow:hidden;letter-spacing:-0.04px">yes</div>
<div class="t" style="left:1276px;top:482px;width:28px;overflow:hidden;letter-spacing:0.14px">auto</div>
<div class="t" style="left:221px;top:497px;width:118px;overflow:hidden;letter-spacing:-0.53px">DODGE GRAND CAR...</div>
<div class="t" style="left:340px;width:22px;text-align:right;top:497px;letter-spacing:-0.12px">7</div>
<div class="t" style="left:366px;top:497px;width:198px;overflow:hidden;letter-spacing:-0.06px">Van(Mini) - Inclusive GPS - Plus Exces...</div>
<div class="t" style="left:566px;top:497px;width:73px;overflow:hidden;letter-spacing:0.05px">Flexible Car...</div>
<div class="t" style="left:641px;top:497px;width:32px;overflow:hidden;letter-spacing:-0.17px">Sat</div>
<div class="t" style="left:675px;top:497px;width:69px;overflow:hidden;letter-spacing:0.09px">19/08/2017</div>
<div class="t" style="left:746px;top:497px;width:38px;overflow:hidden;letter-spacing:-0.11px">12:00</div>
<div class="t" style="left:786px;top:497px;width:33px;overflow:hidden;letter-spacing:-0.53px">Sun</div>
<div class="t" style="left:821px;top:497px;width:68px;overflow:hidden;letter-spacing:0.09px">20/08/2017</div>
<div class="t" style="left:891px;top:497px;width:38px;overflow:hidden;letter-spacing:-0.11px">12:00</div>
<div class="t" style="left:930px;width:22px;text-align:right;top:497px;letter-spacing:-0.12px">1</div>
<div class="t" style="left:956px;top:497px;width:48px;overflow:hidden;letter-spacing:0.30px">Shuttl...</div>
<div class="t" style="left:1006px;top:497px;width:48px;overflow:hidden;letter-spacing:0.32px">On Air...</div>
<div class="t" style="left:1055px;width:52px;text-align:right;top:497px;letter-spacing:0.09px">67.87</div>
<div class="t" style="left:1110px;width:62px;text-align:right;top:497px;letter-spacing:0.09px">67.87</div>
<div class="t" style="left:1176px;top:497px;width:73px;overflow:hidden;letter-spacing:-0.17px">National</div>
<div class="t" style="left:1251px;top:497px;width:23px;overflow:hidden;letter-spacing:-0.04px">yes</div>
<div class="t" style="left:1276px;top:497px;width:28px;overflow:hidden;letter-spacing:0.14px">auto</div>
<div class="t" style="left:221px;top:512px;width:118px;overflow:hidden;letter-spacing:-0.53px">DODGE GRAND CAR...</div>
<div class="t" style="left:340px;width:22px;text-align:right;top:512px;letter-spacing:-0.12px">7</div>
<div class="t" style="left:366px;top:512px;width:198px;overflow:hidden;letter-spacing:0.01px">Van(Mini) - Inclusive product</div>
<div class="t" style="left:566px;top:512px;width:73px;overflow:hidden;letter-spacing:0.05px">Flexible Car...</div>
<div class="t" style="left:641px;top:512px;width:32px;overflow:hidden;letter-spacing:-0.17px">Sat</div>
<div class="t" style="left:675px;top:512px;width:69px;overflow:hidden;letter-spacing:0.09px">19/08/2017</div>
<div class="t" style="left:746px;top:512px;width:38px;overflow:hidden;letter-spacing:-0.11px">12:00</div>
<div class="t" style="left:786px;top:512px;width:33px;overflow:hidden;letter-spacing:-0.53px">Sun</div>
<div class="t" style="left:821px;top:512px;width:68px;overflow:hidden;letter-spacing:0.09px">20/08/2017</div>
<div class="t" style="left:891px;top:512px;width:38px;overflow:hidden;letter-spacing:-0.11px">12:00</div>
<div class="t" style="left:930px;width:22px;text-align:right;top:512px;letter-spacing:-0.12px">1</div>
<div class="t" style="left:956px;top:512px;width:48px;overflow:hidden;letter-spacing:0.32px">On Air...</div>
<div class="t" style="left:1006px;top:512px;width:48px;overflow:hidden;letter-spacing:0.32px">On Air...</div>
<div class="t" style="left:1055px;width:52px;text-align:right;top:512px;letter-spacing:0.09px">76.10</div>
<div class="t" style="left:1110px;width:62px;text-align:right;top:512px;letter-spacing:0.09px">76.10</div>
<div class="t" style="left:1176px;top:512px;width:73px;overflow:hidden;letter-spacing:-0.64px">Alamo</div>
<div class="t" style="left:1251px;top:512px;width:23px;overflow:hidden;letter-spacing:-0.04px">yes</div>
<div class="t" style="left:1276px;top:512px;width:28px;overflow:hidden;letter-spacing:0.14px">auto</div>
<div class="t" style="left:221px;top:527px;width:118px;overflow:hidden;letter-spacing:-0.53px">DODGE GRAND CAR...</div>
<div class="t" style="left:340px;width:22px;text-align:right;top:527px;letter-spacing:-0.12px">7</div>
<div class="t" style="left:366px;top:527px;width:198px;overflow:hidden;letter-spacing:0.16px">Van(Mini) - Young Driver (age 24 or b...</div>
<div class="t" style="left:566px;top:527px;width:73px;overflow:hidden;letter-spacing:0.05px">Flexible Car...</div>
<div class="t" style="left:641px;top:527px;width:32px;overflow:hidden;letter-spacing:-0.17px">Sat</div>
<div class="t" style="left:675px;top:527px;width:69px;overflow:hidden;letter-spacing:0.09px">19/08/2017</div>
<div class="t" style="left:746px;top:527px;width:38px;overflow:hidden;letter-spacing:-0.11px">12:00</div>
<div class="t" style="left:786px;top:527px;width:33px;overflow:hidden;letter-spacing:-0.53px">Sun</div>
<div class="t" style="left:821px;top:527px;width:68px;overflow:hidden;letter-spacing:0.09px">20/08/2017</div>
<div class="t" style="left:891px;top:527px;width:38px;overflow:hidden;letter-spacing:-0.11px">12:00</div>
<div class="t" style="left:930px;width:22px;text-align:right;top:527px;letter-spacing:-0.12px">1</div>
<div class="t" style="left:956px;top:527px;width:48px;overflow:hidden;letter-spacing:0.32px">On Air...</div>
<div class="t" style="left:1006px;top:527px;width:48px;overflow:hidden;letter-spacing:0.32px">On Air...</div>
<div class="t" style="left:1055px;width:52px;text-align:right;top:527px;letter-spacing:0.09px">76.10</div>
<div class="t" style="left:1110px;width:62px;text-align:right;top:527px;letter-spacing:0.09px">76.10</div>
<div class="t" style="left:1176px;top:527px;width:73px;overflow:hidden;letter-spacing:-0.64px">Alamo</div>
<div class="t" style="left:1251px;top:527px;width:23px;overflow:hidden;letter-spacing:-0.04px">yes</div>
<div class="t" style="left:1276px;top:527px;width:28px;overflow:hidden;letter-spacing:0.14px">auto</div>
<div class="t" style="left:221px;top:542px;width:118px;overflow:hidden;letter-spacing:-0.53px">DODGE GRAND CAR...</div>
<div class="t" style="left:340px;width:22px;text-align:right;top:542px;letter-spacing:-0.12px">7</div>
<div class="t" style="left:366px;top:542px;width:198px;overflow:hidden;letter-spacing:0.08px">Van(Mini) - Inclusive product - Plus Ex...</div>
<div class="t" style="left:566px;top:542px;width:73px;overflow:hidden;letter-spacing:0.05px">Flexible Car...</div>
<div class="t" style="left:641px;top:542px;width:32px;overflow:hidden;letter-spacing:-0.17px">Sat</div>
<div class="t" style="left:675px;top:542px;width:69px;overflow:hidden;letter-spacing:0.09px">19/08/2017</div>
<div class="t" style="left:746px;top:542px;width:38px;overflow:hidden;letter-spacing:-0.11px">12:00</div>
<div class="t" style="left:786px;top:542px;width:33px;overflow:hidden;letter-spacing:-0.53px">Sun</div>
<div class="t" style="left:821px;top:542px;width:68px;overflow:hidden;letter-spacing:0.09px">20/08/2017</div>
<div class="t" style="left:891px;top:542px;width:38px;overflow:hidden;letter-spacing:-0.11px">12:00</div>
<div class="t" style="left:930px;width:22px;text-align:right;top:542px;letter-spacing:-0.12px">1</div>
<div class="t" style="left:956px;top:542px;width:48px;overflow:hidden;letter-spacing:0.32px">On Air...</div>
<div class="t" style="left:1006px;top:542px;width:48px;overflow:hidden;letter-spacing:0.32px">On Air...</div>
<div class="t" style="left:1055px;width:52px;text-align:right;top:542px;letter-spacing:0.09px">78.61</div>
<div class="t" style="left:1110px;width:62px;text-align:right;top:542px;letter-spacing:0.09px">78.61</div>
<div class="t" style="left:1176px;top:542px;width:73px;overflow:hidden;letter-spacing:-0.64px">Alamo</div>
<div class="t" style="left:1251px;top:542px;width:23px;overflow:hidden;letter-spacing:-0.04px">yes</div>
<div class="t" style="left:1276px;top:542px;width:28px;overflow:hidden;letter-spacing:0.14px">auto</div>
<div class="t" style="left:221px;top:557px;width:118px;overflow:hidden;letter-spacing:-0.53px">DODGE GRAND CAR...</div>
<div class="t" style="left:340px;width:22px;text-align:right;top:557px;letter-spacing:-0.12px">7</div>
<div class="t" style="left:366px;top:557px;width:198px;overflow:hidden;letter-spacing:0.16px">Van(Mini) - Young Driver (age 24 or b...</div>
<div class="t" style="left:566px;top:557px;width:73px;overflow:hidden;letter-spacing:0.05px">Flexible Car...</div>
<div class="t" style="left:641px;top:557px;width:32px;overflow:hidden;letter-spacing:-0.17px">Sat</div>
<div class="t" style="left:675px;top:557px;width:69px;overflow:hidden;letter-spacing:0.09px">19/08/2017</div>
<div class="t" style="left:746px;top:557px;width:38px;overflow:hidden;letter-spacing:-0.11px">12:00</div>
<div class="t" style="left:786px;top:557px;width:33px;overflow:hidden;letter-spacing:-0.53px">Sun</div>
<div class="t" style="left:821px;top:557px;width:68px;overflow:hidden;letter-spacing:0.09px">20/08/2017</div>
<div class="t" style="left:891px;top:557px;width:38px;overflow:hidden;letter-spacing:-0.11px">12:00</div>
<div class="t" style="left:930px;width:22px;text-align:right;top:557px;letter-spacing:-0.12px">1</div>
<div class="t" style="left:956px;top:557px;width:48px;overflow:hidden;letter-spacing:0.32px">On Air...</div>
<div class="t" style="left:1006px;top:557px;width:48px;overflow:hidden;letter-spacing:0.32px">On Air...</div>
<div class="t" style="left:1055px;width:52px;text-align:right;top:557px;letter-spacing:0.09px">78.61</div>
<div class="t" style="left:1110px;width:62px;text-align:right;top:557px;letter-spacing:0.09px">78.61</div>
<div class="t" style="left:1176px;top:557px;width:73px;overflow:hidden;letter-spacing:-0.64px">Alamo</div>
<div class="t" style="left:1251px;top:557px;width:23px;overflow:hidden;letter-spacing:-0.04px">yes</div>
<div class="t" style="left:1276px;top:557px;width:28px;overflow:hidden;letter-spacing:0.14px">auto</div>
<div class="t" style="left:221px;top:572px;width:118px;overflow:hidden;letter-spacing:-0.53px">DODGE GRAND CAR...</div>
<div class="t" style="left:340px;width:22px;text-align:right;top:572px;letter-spacing:-0.12px">7</div>
<div class="t" style="left:366px;top:572px;width:198px;overflow:hidden;letter-spacing:0.01px">Van(Mini) - Inclusive product</div>
<div class="t" style="left:566px;top:572px;width:73px;overflow:hidden;letter-spacing:0.05px">Flexible Car...</div>
<div class="t" style="left:641px;top:572px;width:32px;overflow:hidden;letter-spacing:-0.17px">Sat</div>
<div class="t" style="left:675px;top:572px;width:69px;overflow:hidden;letter-spacing:0.09px">19/08/2017</div>
<div class="t" style="left:746px;top:572px;width:38px;overflow:hidden;letter-spacing:-0.11px">12:00</div>
<div class="t" style="left:786px;top:572px;width:33px;overflow:hidden;letter-spacing:-0.53px">Sun</div>
<div class="t" style="left:821px;top:572px;width:68px;overflow:hidden;letter-spacing:0.09px">20/08/2017</div>
<div class="t" style="left:891px;top:572px;width:38px;overflow:hidden;letter-spacing:-0.11px">12:00</div>
<div class="t" style="left:930px;width:22px;text-align:right;top:572px;letter-spacing:-0.12px">1</div>
<div class="t" style="left:956px;top:572px;width:48px;overflow:hidden;letter-spacing:0.30px">Shuttl...</div>
<div class="t" style="left:1006px;top:572px;width:48px;overflow:hidden;letter-spacing:0.32px">On Air...</div>
<div class="t" style="left:1055px;width:52px;text-align:right;top:572px;letter-spacing:0.09px">80.05</div>
<div class="t" style="left:1110px;width:62px;text-align:right;top:572px;letter-spacing:0.09px">80.05</div>
<div class="t" style="left:1176px;top:572px;width:73px;overflow:hidden;letter-spacing:-0.17px">National</div>
<div class="t" style="left:1251px;top:572px;width:23px;overflow:hidden;letter-spacing:-0.04px">yes</div>
<div class="t" style="left:1276px;top:572px;width:28px;overflow:hidden;letter-spacing:0.14px">auto</div>
<div class="t" style="left:221px;top:587px;width:118px;overflow:hidden;letter-spacing:-0.53px">DODGE GRAND CAR...</div>
<div class="t" style="left:340px;width:22px;text-align:right;top:587px;letter-spacing:-0.12px">7</div>
<div class="t" style="left:366px;top:587px;width:198px;overflow:hidden;letter-spacing:0.16px">Van(Mini) - Young Driver (age 24 or b...</div>
<div class="t" style="left:566px;top:587px;width:73px;overflow:hidden;letter-spacing:0.05px">Flexible Car...</div>
<div class="t" style="left:641px;top:587px;width:32px;overflow:hidden;letter-spacing:-0.17px">Sat</div>
<div class="t" style="left:675px;top:587px;width:69px;overflow:hidden;letter-spacing:0.09px">19/08/2017</div>
<div class="t" style="left:746px;top:587px;width:38px;overflow:hidden;letter-spacing:-0.11px">12:00</div>
<div class="t" style="left:786px;top:587px;width:33px;overflow:hidden;letter-spacing:-0.53px">Sun</div>
<div class="t" style="left:821px;top:587px;width:68px;overflow:hidden;letter-spacing:0.09px">20/08/2017</div>
<div class="t" style="left:891px;top:587px;width:38px;overflow:hidden;letter-spacing:-0.11px">12:00</div>
<div class="t" style="left:930px;width:22px;text-align:right;top:587px;letter-spacing:-0.12px">1</div>
<div class="t" style="left:956px;top:587px;width:48px;overflow:hidden;letter-spacing:0.30px">Shuttl...</div>
<div class="t" style="left:1006px;top:587px;width:48px;overflow:hidden;letter-spacing:0.32px">On Air...</div>
<div class="t" style="left:1055px;width:52px;text-align:right;top:587px;letter-spacing:0.09px">80.05</div>
<div class="t" style="left:1110px;width:62px;text-align:right;top:587px;letter-spacing:0.09px">80.05</div>
<div class="t" style="left:1176px;top:587px;width:73px;overflow:hidden;letter-spacing:-0.17px">National</div>
<div class="t" style="left:1251px;top:587px;width:23px;overflow:hidden;letter-spacing:-0.04px">yes</div>
<div class="t" style="left:1276px;top:587px;width:28px;overflow:hidden;letter-spacing:0.14px">auto</div>
<div class="t" style="left:221px;top:602px;width:118px;overflow:hidden;letter-spacing:-0.53px">DODGE GRAND CAR...</div>
<div class="t" style="left:340px;width:22px;text-align:right;top:602px;letter-spacing:-0.12px">7</div>
<div class="t" style="left:366px;top:602px;width:198px;overflow:hidden;letter-spacing:0.08px">Van(Mini) - Inclusive product - Plus Ex...</div>
<div class="t" style="left:566px;top:602px;width:73px;overflow:hidden;letter-spacing:0.05px">Flexible Car...</div>
<div class="t" style="left:641px;top:602px;width:32px;overflow:hidden;letter-spacing:-0.17px">Sat</div>
<div class="t" style="left:675px;top:602px;width:69px;overflow:hidden;letter-spacing:0.09px">19/08/2017</div>
<div class="t" style="left:746px;top:602px;width:38px;overflow:hidden;letter-spacing:-0.11px">12:00</div>
<div class="t" style="left:786px;top:602px;width:33px;overflow:hidden;letter-spacing:-0.53px">Sun</div>
<div class="t" style="left:821px;top:602px;width:68px;overflow:hidden;letter-spacing:0.09px">20/08/2017</div>
<div class="t" style="left:891px;top:602px;width:38px;overflow:hidden;letter-spacing:-0.11px">12:00</div>
<div class="t" style="left:930px;width:22px;text-align:right;top:602px;letter-spacing:-0.12px">1</div>
<div class="t" style="left:956px;top:602px;width:48px;overflow:hidden;letter-spacing:0.30px">Shuttl...</div>
<div class="t" style="left:1006px;top:602px;width:48px;overflow:hidden;letter-spacing:0.32px">On Air...</div>
<div class="t" style="left:1055px;width:52px;text-align:right;top:602px;letter-spacing:0.09px">82.56</div>
<div class="t" style="left:1110px;width:62px;text-align:right;top:602px;letter-spacing:0.09px">82.56</div>
<div class="t" style="left:1176px;top:602px;width:73px;overflow:hidden;letter-spacing:-0.17px">National</div>
<div class="t" style="left:1251px;top:602px;width:23px;overflow:hidden;letter-spacing:-0.04px">yes</div>
<div class="t" style="left:1276px;top:602px;width:28px;overflow:hidden;letter-spacing:0.14px">auto</div>
<div class="t" style="left:221px;top:617px;width:118px;overflow:hidden;letter-spacing:-0.53px">DODGE GRAND CAR...</div>
<div class="t" style="left:340px;width:22px;text-align:right;top:617px;letter-spacing:-0.12px">7</div>
<div class="t" style="left:366px;top:617px;width:198px;overflow:hidden;letter-spacing:0.16px">Van(Mini) - Young Driver (age 24 or b...</div>
<div class="t" style="left:566px;top:617px;width:73px;overflow:hidden;letter-spacing:0.05px">Flexible Car...</div>
<div class="t" style="left:641px;top:617px;width:32px;overflow:hidden;letter-spacing:-0.17px">Sat</div>
<div class="t" style="left:675px;top:617px;width:69px;overflow:hidden;letter-spacing:0.09px">19/08/2017</div>
<div class="t" style="left:746px;top:617px;width:38px;overflow:hidden;letter-spacing:-0.11px">12:00</div>
<div class="t" style="left:786px;top:617px;width:33px;overflow:hidden;letter-spacing:-0.53px">Sun</div>
<div class="t" style="left:821px;top:617px;width:68px;overflow:hidden;letter-spacing:0.09px">20/08/2017</div>
<div class="t" style="left:891px;top:617px;width:38px;overflow:hidden;letter-spacing:-0.11px">12:00</div>
<div class="t" style="left:930px;width:22px;text-align:right;top:617px;letter-spacing:-0.12px">1</div>
<div class="t" style="left:956px;top:617px;width:48px;overflow:hidden;letter-spacing:0.30px">Shuttl...</div>
<div class="t" style="left:1006px;top:617px;width:48px;overflow:hidden;letter-spacing:0.32px">On Air...</div>
<div class="t" style="left:1055px;width:52px;text-align:right;top:617px;letter-spacing:0.09px">82.56</div>
<div class="t" style="left:1110px;width:62px;text-align:right;top:617px;letter-spacing:0.09px">82.56</div>
<div class="t" style="left:1176px;top:617px;width:73px;overflow:hidden;letter-spacing:-0.17px">National</div>
<div class="t" style="left:1251px;top:617px;width:23px;overflow:hidden;letter-spacing:-0.04px">yes</div>
<div class="t" style="left:1276px;top:617px;width:28px;overflow:hidden;letter-spacing:0.14px">auto</div>
<svg class="a" style="left:324px;top:376px" width="14" height="11"><path d="M1 1 H12.5 L7.8 6 V9.5 H5.8 V6 Z" fill="#C8DCF0" stroke="#000" stroke-width="1.3" stroke-linejoin="round"/><path d="M3 2 L6.5 5.5" stroke="#fff" stroke-width="1"/></svg>
<svg class="a" style="left:1165px;top:379px" width="7" height="4"><path d="M0 0 H7 L3.5 4 Z" fill="#808080"/></svg>
<!-- TABLE END -->
<!-- bottom info -->
<div class="t" style="left:222px;top:783px;letter-spacing:0.11px">First portion: 10.0 sec, total search time: 10.2 sec</div>
<div class="a" style="left:1560px;top:778px;width:23px;height:22px;background:#D4D0C8;border-top:1px solid #fff;border-left:1px solid #fff;border-right:1px solid #404040;border-bottom:1px solid #404040;box-shadow:inset -1px -1px 0 #808080"></div>
<svg class="a" style="left:1568px;top:783px" width="6" height="12"><circle cx="3.2" cy="1.6" r="1.6" fill="#0A58B8"/><path d="M0.5 4 H4.4 V10.6 H5.8 V12 H0.3 V10.6 H1.7 V5.3 H0.5 Z" fill="#0048A8"/></svg>
<!-- bottom tabs -->
<div class="a" style="left:215px;top:805px;width:1378px;height:1px;background:#808080"></div>
<div class="a btab" style="left:215px;width:53px;background:#D4D0C8"></div>
<div class="a btab" style="left:268px;width:41px;background:#D4D0C8"></div>
<div class="a btab" style="left:309px;width:150px;background:#C0C0FF;border-right:none"></div>
<div class="a btab" style="left:459px;width:159px;background:#C8FFC0"></div>
<div class="a btab" style="left:618px;width:158px;background:#C8FFC0;border-right:none"></div>
<div class="a btab" style="left:776px;width:73px;background:#C0C0FF;border-right:none"></div>
<div class="a" style="left:849px;top:805px;width:64px;height:18px;background:#078707;border-radius:2px 2px 0 2px"></div>
<div class="a btab" style="left:913px;width:97px;background:#D4D0C8"></div>
<div class="t" style="left:218px;top:808px;letter-spacing:-0.44px">Summary</div>
<div class="t" style="left:270px;top:808px;letter-spacing:-0.31px">Search</div>
<div class="t" style="left:312px;top:808px;letter-spacing:-0.20px">Acc 2A,2C Bonita Springs (FL)</div>
<div class="t" style="left:463px;top:808px;letter-spacing:-0.04px">Acc 2A,2C MIA; 07/08/2017 2n</div>
<div class="t" style="left:621px;top:808px;letter-spacing:-0.04px">Acc 2A,2C MIA; 09/08/2017 3n</div>
<div class="t" style="left:779px;top:808px;letter-spacing:-0.28px">Car MCO MIA</div>
<div class="t" style="left:852px;top:808px;color:#fff;letter-spacing:-0.14px">Car MIA PBI</div>
<div class="t" style="left:917px;top:808px;letter-spacing:-0.36px">Financial Summary</div>

<!-- STATUS BAR -->
<div class="t" style="left:786px;top:832px;letter-spacing:0.02px">User: 444 - Charlie Fitter</div>
<div class="t" style="left:916px;top:832px;letter-spacing:-0.16px">Retailer: 'Ocean-Florida'</div>
<div class="t" style="left:1042px;top:832px;letter-spacing:-0.06px">Client: none</div>
<div class="t" style="left:1539px;top:832px;letter-spacing:-0.34px">19:00 GMT</div>
<div class="a" style="left:0;top:857px;width:1600px;height:1px;background:#ECEAE6"></div><div class="a" style="left:0;top:858px;width:1600px;height:1px;background:#808080"></div><div class="a" style="left:0;top:859px;width:1600px;height:1px;background:#404040"></div>

</body></html>
